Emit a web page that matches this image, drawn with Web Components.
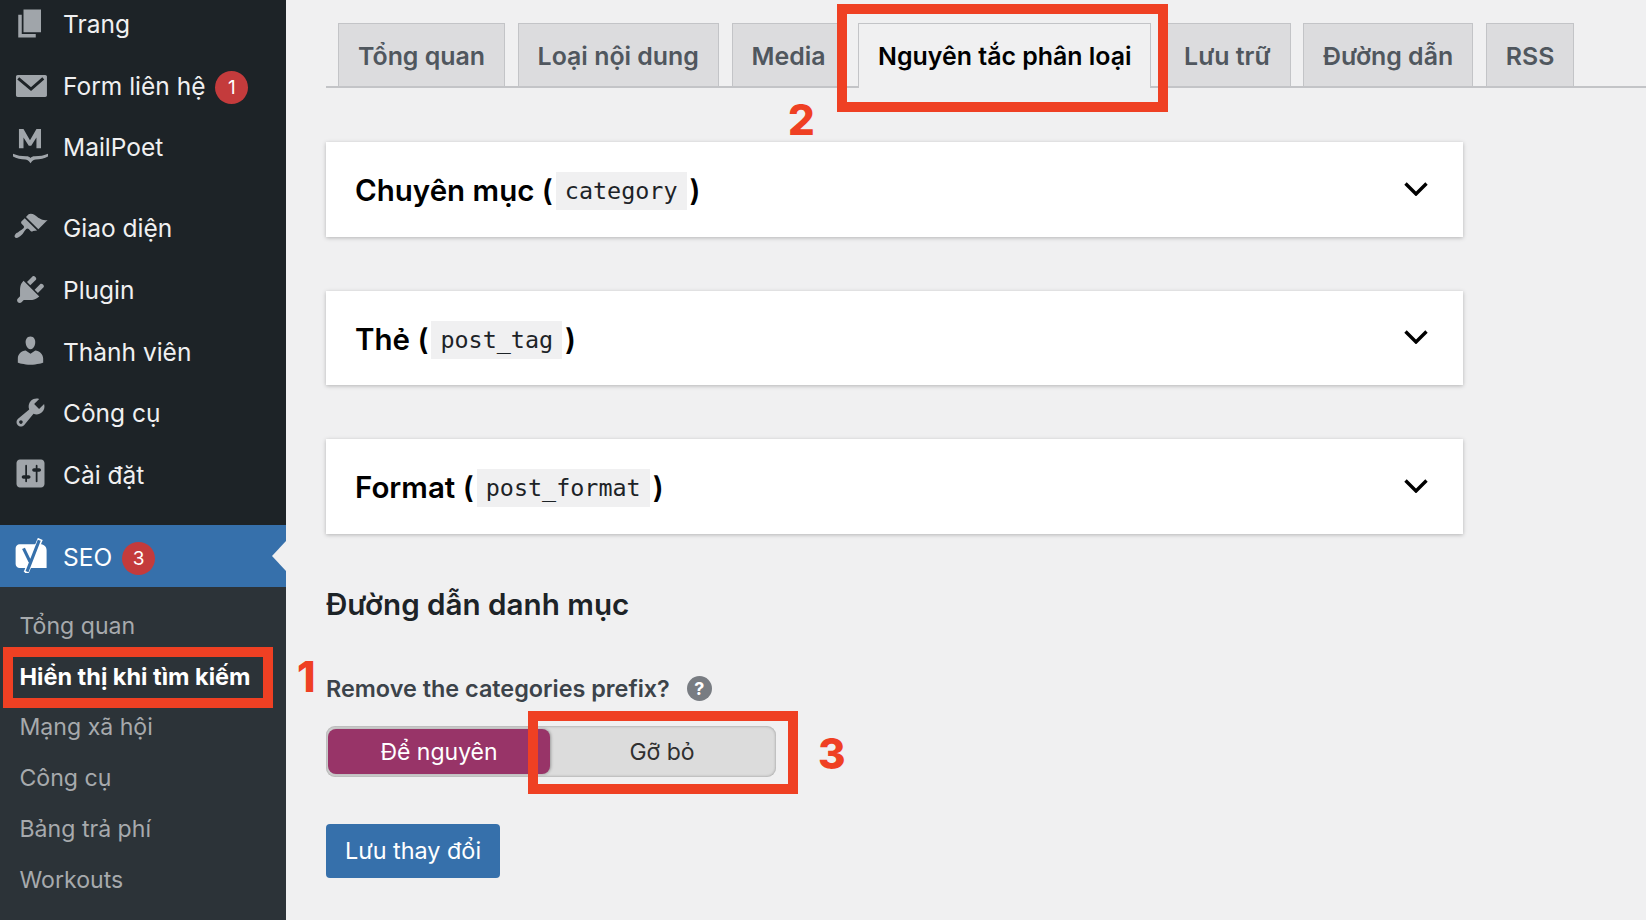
<!DOCTYPE html>
<html lang="vi">
<head>
<meta charset="utf-8">
<title>Yoast SEO</title>
<style>
  html, body { margin: 0; height: 920px; overflow: hidden; background: #f0f0f1; font-family: Inter, "Noto Sans", sans-serif; }
</style>
</head>
<body>
<seo-page></seo-page>
<script>
const ICONS = {
  page: '<path d="M6 15V2h10v13H6zm-1 1h8v2H3V5h2v11z"/>',
  mail: '<path d="M2.700 4.600h15.700c.6 0 1 .4 1 1v10.600c0 .6-.4 1-1 1H2.700c-.6 0-1-.4-1-1V5.600c0-.6.4-1 1-1z"/><path d="M3 6.500l7.300 6.100 7-6.100" fill="none" stroke="#1d2327" stroke-width="1.700"/>',
  poet: '<path d="M3.400 0H6l3.700 6.400L13.400 0H16v11h-2.600V4.800l-3 4.800H9L6 4.800V11H3.400z"/><path d="M0 14.200c2 1 5 1.400 7.500 1.400 1.200 0 2 .3 2.500 1 .5-.7 1.300-1 2.500-1 2.500 0 5.500-.4 7.500-1.400v1.500c-1.800 1.200-4.700 1.700-7 1.700-1 0-1.700.4-3 2.100-1.300-1.700-2-2.100-3-2.100-2.300 0-5.200-.5-7-1.700z"/>',
  brush: '<path d="M14.480 11.060L7.410 3.990l1.500-1.500c.5-.56 2.300-.47 3.510.32 1.210.8 1.430 1.280 2.910 2.100 1.180.64 2.450 1.260 4.450.85zm-.71.71L6.700 4.700 4.930 6.470c-.39.39-.39 1.020 0 1.410l1.060 1.060c.39.39.39 1.030 0 1.420-.6.6-1.430 1.110-2.210 1.690-.35.26-.7.53-1.010.84C1.430 13.230.4 14.910 1.200 15.700c.79.8 2.470-.23 3.830-1.590.31-.31.58-.66.84-1.010.58-.78 1.090-1.610 1.690-2.210.39-.39 1.030-.39 1.420 0l1.060 1.060c.39.39 1.020.39 1.410 0z"/>',
  plug: '<path d="M13.110 4.360L9.870 7.600 8 5.730l3.240-3.240c.35-.34 1.050-.2 1.560.32.52.51.66 1.210.31 1.550zm-8 1.770l.91-1.120 9.010 9.010-1.190.84c-.71.71-2.630 1.160-3.820 1.160H6.140L4.900 17.260c-.59.59-1.540.59-2.120 0-.59-.58-.59-1.530 0-2.120l1.240-1.240v-3.880c0-1.130.4-3.190 1.090-3.890zm7.260 3.970l3.240-3.240c.34-.35 1.040-.21 1.550.31.52.51.66 1.210.31 1.550l-3.240 3.250z"/>',
  user: '<path d="M10 9.250c-2.270 0-2.730-3.440-2.730-3.440C7 4.020 7.820 2 9.970 2c2.160 0 2.980 2.020 2.710 3.810 0 0-.41 3.440-2.680 3.440zm0 2.570L12.720 10c2.390 0 4.520 2.330 4.520 4.530v2.490s-3.650 1.130-7.240 1.130c-3.650 0-7.240-1.130-7.240-1.130v-2.490c0-2.250 1.940-4.480 4.470-4.480z"/>',
  tools: '<path d="M16.680 9.770c-1.340 1.340-3.300 1.670-4.950.99l-5.410 6.520c-.99.99-2.590.99-3.580 0s-.99-2.590 0-3.570l6.520-5.420c-.68-1.650-.35-3.610.99-4.950 1.280-1.280 3.120-1.620 4.720-1.060l-2.890 2.890 2.820 2.820 2.860-2.870c.53 1.580.18 3.390-1.080 4.650zM3.810 16.210c.4.39 1.040.39 1.430 0 .4-.4.4-1.040 0-1.430-.39-.4-1.030-.4-1.430 0-.39.39-.39 1.030 0 1.430z"/>',
  sliders: '<path d="M18 16V4c0-1.100-.9-2-2-2H4c-1.100 0-2 .9-2 2v12c0 1.100.9 2 2 2h12c1.100 0 2-.9 2-2zM8 11h1c.55 0 1 .45 1 1s-.45 1-1 1H8v1.500c0 .28-.22.5-.5.5s-.5-.22-.5-.5V13H6c-.55 0-1-.45-1-1s.45-1 1-1h1V5.500c0-.28.22-.5.5-.5s.5.22.5.5V11zm5-2h-1c-.55 0-1-.45-1-1s.45-1 1-1h1V5.500c0-.28.22-.5.5-.5s.5.22.5.5V7h1c.55 0 1 .45 1 1s-.45 1-1 1h-1v5.500c0 .28-.22.5-.5.5s-.5-.22-.5-.5V9z"/>',
  yoast: '<path d="M3.800 3.600h11.900c2 0 3.500 1.400 3.500 3.400v10.200H9.500L8 20H6.700l.7-2.800H3.800c-1.300 0-2.300-1-2.300-2.300v-9c0-1.300 1-2.300 2.300-2.300z" fill="#fff"/><path d="M15.600.5 7.500 19.800" fill="none" stroke="#fff" stroke-width="3"/><path d="M15 1.300 8 19.200M6 5.900l3.700 7.600" fill="none" stroke="#3670ab" stroke-width="1.800"/>'
};

class MenuIcon extends HTMLElement {
  connectedCallback() {
    const root = this.shadowRoot || this.attachShadow({ mode: 'open' });
    root.innerHTML = `
      <style>
        :host { display: block; width: 35px; height: 35px; color: inherit; }
        svg { display: block; width: 100%; height: 100%; fill: currentColor; }
      </style>
      <svg viewBox="0 0 20 20" aria-hidden="true">${ICONS[this.getAttribute('name')] || ''}</svg>`;
  }
}

class MenuItem extends HTMLElement {
  connectedCallback() {
    const badge = this.getAttribute('badge');
    const root = this.shadowRoot || this.attachShadow({ mode: 'open' });
    root.innerHTML = `
      <style>
        :host { display: flex; align-items: center; height: 61.6px; padding-left: 13px; color: #f0f0f1; font-size: 24.5px; line-height: 1; }
        :host([current]) { background: #3670ab; color: #fff; position: relative; height: 62px; }
        :host([current])::after {
          content: ''; position: absolute; right: 0; top: 50%; margin-top: -15px;
          border: 15px solid transparent; border-left: 0; border-right: 14px solid #f0f0f1;
        }
        .ic { color: #a0a5aa; margin-right: 15px; margin-top: -1px; }
        :host([current]) .ic { color: #fff; }
        .txt { margin-top: 1px; }
        :host([current]) .txt { margin-top: 3px; }
        .badge {
          width: 33px; height: 33px; margin: 4px 0 0 10px; border-radius: 50%;
          background: #c43b3c; color: #fff; font-size: 19px; display: flex; align-items: center; justify-content: center;
        }
        :host([current]) .badge { margin-top: 5px; }
      </style>
      <menu-icon class="ic" name="${this.getAttribute('icon')}"></menu-icon>
      <span class="txt"><slot></slot></span>
      ${badge ? `<span class="badge">${badge}</span>` : ''}`;
  }
}

class SubItem extends HTMLElement {
  constructor() {
    super();
    this.attachShadow({ mode: 'open' }).innerHTML = `
      <style>
        :host { display: flex; align-items: center; height: 50.7px; padding-left: 19.500px; color: #a7aaad; font-size: 23.100px; }
        :host([current]) { color: #fff; font-weight: 700; font-size: 23.500px; }
      </style>
      <slot></slot>`;
  }
}

class AdminSidebar extends HTMLElement {
  constructor() {
    super();
    this.attachShadow({ mode: 'open' }).innerHTML = `
      <style>
        :host { display: flex; flex-direction: column; width: 286px; height: 920px; background: #1d2327; overflow: hidden; }
        .top { margin-top: -7px; }
        .sep { height: 19.500px; }
        .sub { flex: 1; background: #2c3338; padding-top: 14px; }
      </style>
      <div class="top">
        <menu-item icon="page">Trang</menu-item>
        <menu-item icon="mail" badge="1">Form liên hệ</menu-item>
        <menu-item icon="poet">MailPoet</menu-item>
        <div class="sep"></div>
        <menu-item icon="brush">Giao diện</menu-item>
        <menu-item icon="plug">Plugin</menu-item>
        <menu-item icon="user">Thành viên</menu-item>
        <menu-item icon="tools">Công cụ</menu-item>
        <menu-item icon="sliders">Cài đặt</menu-item>
        <div class="sep"></div>
        <menu-item icon="yoast" badge="3" current>SEO</menu-item>
      </div>
      <div class="sub">
        <sub-item>Tổng quan</sub-item>
        <sub-item current>Hiển thị khi tìm kiếm</sub-item>
        <sub-item>Mạng xã hội</sub-item>
        <sub-item>Công cụ</sub-item>
        <sub-item>Bảng trả phí</sub-item>
        <sub-item>Workouts</sub-item>
      </div>`;
  }
}

class TabItem extends HTMLElement {
  constructor() {
    super();
    this.attachShadow({ mode: 'open' }).innerHTML = `
      <style>
        :host {
          display: flex; align-items: center; box-sizing: border-box; height: 63px; padding: 2px 19px 0;
          background: #dcdcde; border: 1.500px solid #c3c4c7; border-bottom: 0;
          color: #50575e; font-size: 24.900px; font-weight: 600; white-space: nowrap;
        }
        :host([active]) { background: #f0f0f1; color: #000; height: 65px; margin-bottom: -2px; padding-bottom: 2px; }
      </style>
      <slot></slot>`;
  }
}

class TabBar extends HTMLElement {
  constructor() {
    super();
    this.attachShadow({ mode: 'open' }).innerHTML = `
      <style>
        :host { display: flex; align-items: flex-start; gap: 12.600px; height: 63px; padding-left: 12px; margin-top: 23px; border-bottom: 2px solid #c3c4c7; }
      </style>
      <slot></slot>`;
  }
}

class AccordionCard extends HTMLElement {
  constructor() {
    super();
    this.attachShadow({ mode: 'open' }).innerHTML = `
      <style>
        :host {
          display: flex; align-items: center; justify-content: space-between; box-sizing: border-box;
          width: 1137px; height: 94.6px; padding: 2px 35px 0 29px; margin-top: 54px;
          background: #fff; box-shadow: 0 1px 4px rgba(0,0,0,.25);
        }
        h2 { margin: 0; font-size: 29.500px; font-weight: 600; color: #000; display: flex; align-items: center; }
        code {
          font-family: "DejaVu Sans Mono", monospace; font-size: 23.400px; font-weight: 400; background: #f0f0f1; color: #1d2327;
          padding: 0 9px; height: 38px; line-height: 38px; margin: 2px 3px 0 3px; display: inline-block;
        }
        svg { display: block; width: 24px; height: 14px; margin-top: -3px; }
      </style>
      <h2>${this.getAttribute('name')}&nbsp;(<code>${this.getAttribute('slug')}</code>)</h2>
      <svg viewBox="0 0 24 14" fill="none" stroke="#000" stroke-width="3.400"><path d="M1.500 1.500 12 12 22.500 1.500"/></svg>`;
  }
}

class ToggleSwitch extends HTMLElement {
  constructor() {
    super();
    this.attachShadow({ mode: 'open' }).innerHTML = `
      <style>
        :host {
          display: grid; grid-template-columns: 222px 1fr; box-sizing: border-box; width: 450px; height: 51px; padding: 3px 2px;
          background: #dcdcdc; border-radius: 9px; box-shadow: inset 0 0 3px rgba(0,0,0,.35); font-size: 23px; color: #303030;
        }
        span { display: flex; align-items: center; justify-content: center; padding-top: 2px; }
        .on { background: #983468; color: #fff; border-radius: 8px; box-shadow: 1px 0 3px rgba(0,0,0,.3); }
      </style>
      <span class="on">Để nguyên</span><span>Gỡ bỏ</span>`;
  }
}

class CategoryForm extends HTMLElement {
  constructor() {
    super();
    this.attachShadow({ mode: 'open' }).innerHTML = `
      <style>
        :host { display: block; }
        h3 { margin: 51px 0 0; font-size: 29.600px; line-height: 38px; font-weight: 600; color: #1d2327; }
        .label { display: flex; align-items: center; gap: 17px; margin-top: 51px; height: 30px; font-size: 23.400px; font-weight: 600; color: #3c434a; }
        .help {
          width: 25px; height: 25px; border-radius: 50%; background: #787c82; color: #fff;
          font-size: 18px; font-weight: 700; display: flex; align-items: center; justify-content: center;
        }
        toggle-switch { margin-top: 22px; }
        button {
          display: block; margin-top: 47px; width: 174px; height: 54px; padding: 0; border: 0; border-radius: 4px;
          background: #3670ab; color: #fff; font: 400 23.400px Inter, sans-serif;
        }
      </style>
      <h3>Đường dẫn danh mục</h3>
      <div class="label">Remove the categories prefix? <span class="help">?</span></div>
      <toggle-switch></toggle-switch>
      <button type="button">Lưu thay đổi</button>`;
  }
}

// red annotation frames and numbers painted over the screenshot
class CalloutBox extends HTMLElement {
  connectedCallback() {
    const [x, y, w, h] = this.getAttribute('rect').split(',');
    this.style.cssText += `left:${x}px;top:${y}px;width:${w}px;height:${h}px;`;
    (this.shadowRoot || this.attachShadow({ mode: 'open' })).innerHTML = `
      <style>
        :host { position: absolute; box-sizing: border-box; border: 10px solid #ef4023; pointer-events: none; }
      </style>`;
  }
}

class CalloutNumber extends HTMLElement {
  connectedCallback() {
    const [x, y] = this.getAttribute('at').split(',');
    this.style.cssText += `left:${x}px;top:${y}px;`;
    (this.shadowRoot || this.attachShadow({ mode: 'open' })).innerHTML = `
      <style>
        :host { position: absolute; color: #ef4023; font: 800 42px/42px Inter, sans-serif; }
      </style>
      <slot></slot>`;
  }
}

class SeoPage extends HTMLElement {
  constructor() {
    super();
    this.attachShadow({ mode: 'open' }).innerHTML = `
      <style>
        :host { display: flex; position: relative; width: 1646px; height: 920px; overflow: hidden; }
        main { flex: 1; padding-left: 40px; }
      </style>
      <admin-sidebar></admin-sidebar>
      <main>
        <tab-bar>
          <tab-item>Tổng quan</tab-item>
          <tab-item>Loại nội dung</tab-item>
          <tab-item>Media</tab-item>
          <tab-item active>Nguyên tắc phân loại</tab-item>
          <tab-item>Lưu trữ</tab-item>
          <tab-item>Đường dẫn</tab-item>
          <tab-item>RSS</tab-item>
        </tab-bar>
        <accordion-card name="Chuyên mục" slug="category"></accordion-card>
        <accordion-card name="Thẻ" slug="post_tag"></accordion-card>
        <accordion-card name="Format" slug="post_format"></accordion-card>
        <category-form></category-form>
      </main>
      <callout-box rect="3,647,270,61"></callout-box>
      <callout-box rect="837,4,331,108"></callout-box>
      <callout-box rect="528,711,270,83"></callout-box>
      <callout-number at="297,656">1</callout-number>
      <callout-number at="788,99">2</callout-number>
      <callout-number at="818,733">3</callout-number>`;
  }
}

customElements.define('menu-icon', MenuIcon);
customElements.define('menu-item', MenuItem);
customElements.define('sub-item', SubItem);
customElements.define('admin-sidebar', AdminSidebar);
customElements.define('tab-item', TabItem);
customElements.define('tab-bar', TabBar);
customElements.define('accordion-card', AccordionCard);
customElements.define('toggle-switch', ToggleSwitch);
customElements.define('category-form', CategoryForm);
customElements.define('callout-box', CalloutBox);
customElements.define('callout-number', CalloutNumber);
customElements.define('seo-page', SeoPage);
</script>
</body>
</html>
